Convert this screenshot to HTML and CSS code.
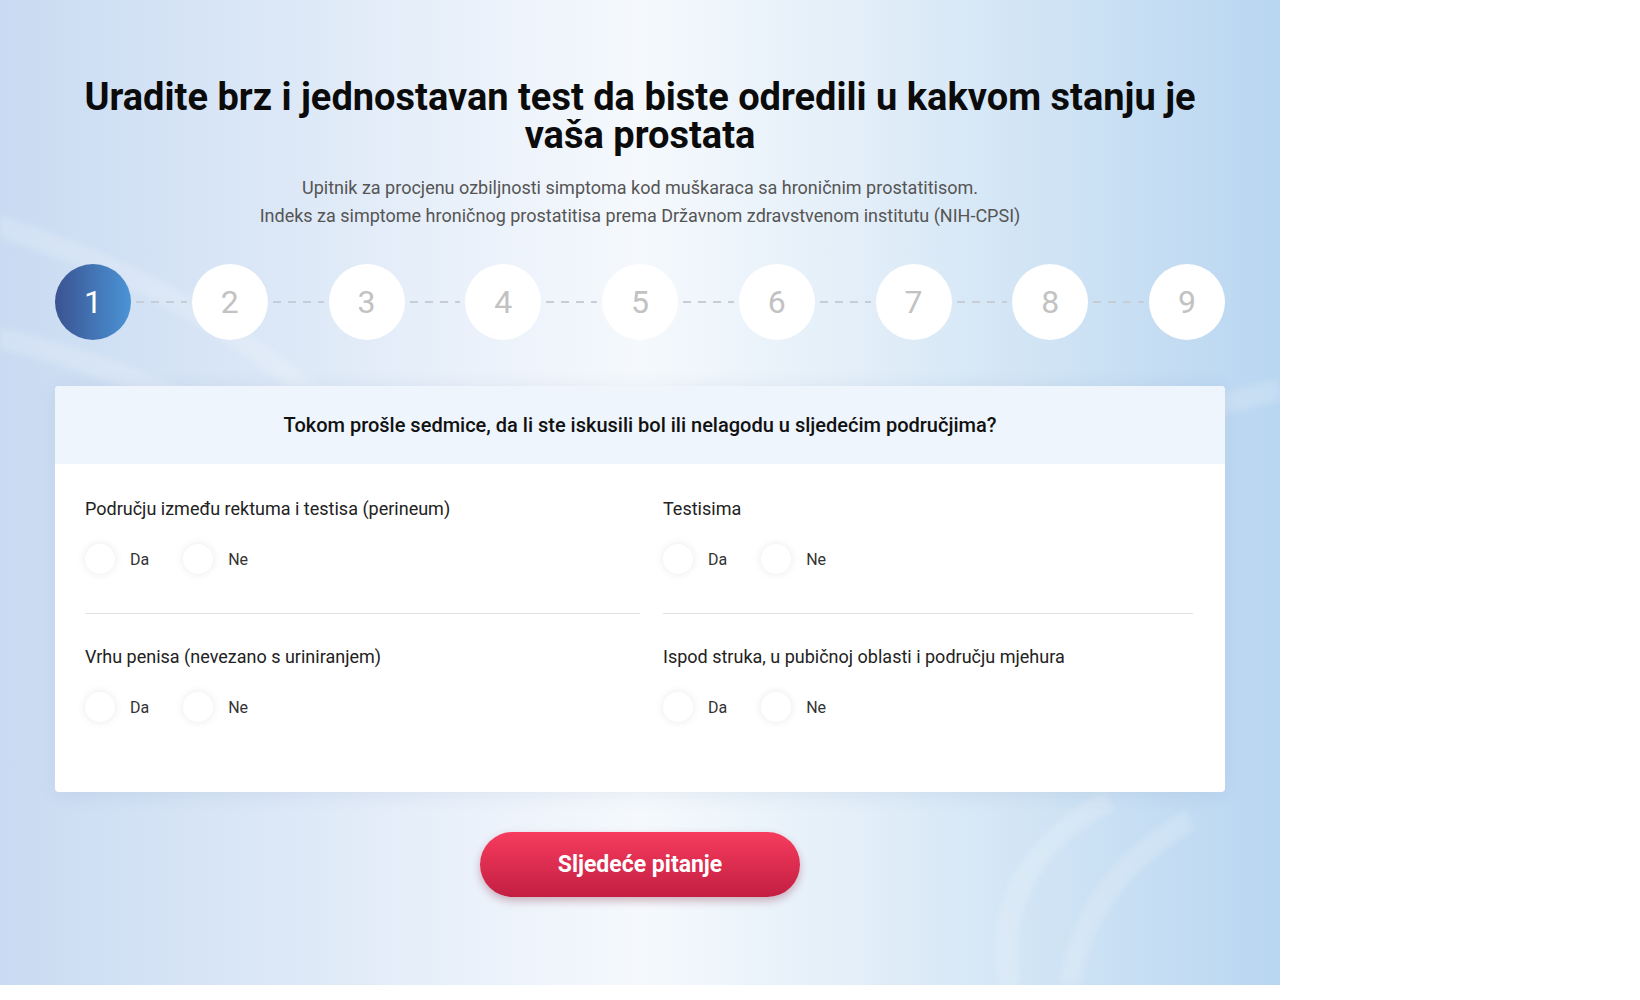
FILE: index.html
```html
<!DOCTYPE html>
<html lang="bs">
<head>
  <meta charset="UTF-8">
  <title>Test prostate</title>
  <link rel="stylesheet" href="styles.css">
</head>
<body>

  <!-- Quiz section -->
  <section class="quiz">
    <svg class="waves" viewBox="0 0 1280 985" preserveAspectRatio="none">
      <path d="M-60 210 C 100 250, 230 320, 330 410" />
      <path d="M-40 330 C 40 345, 120 370, 180 400" />
      <path d="M1280 390 C 1210 405, 1150 425, 1100 450" />
      <path d="M1010 985 C 995 910, 1030 840, 1110 800" />
      <path d="M1070 985 C 1080 915, 1120 860, 1190 820" />
    </svg>

    <div class="container">
      <h1 class="title">Uradite brz i jednostavan test da biste odredili u kakvom stanju je vaša prostata</h1>
      <p class="subtitle">
        Upitnik za procjenu ozbiljnosti simptoma kod muškaraca sa hroničnim prostatitisom.<br>
        Indeks za simptome hroničnog prostatitisa prema Državnom zdravstvenom institutu (NIH-CPSI)
      </p>

      <div class="steps">
        <div class="step active">1</div>
        <div class="dash"></div>
        <div class="step">2</div>
        <div class="dash"></div>
        <div class="step">3</div>
        <div class="dash"></div>
        <div class="step">4</div>
        <div class="dash"></div>
        <div class="step">5</div>
        <div class="dash"></div>
        <div class="step">6</div>
        <div class="dash"></div>
        <div class="step">7</div>
        <div class="dash"></div>
        <div class="step">8</div>
        <div class="dash"></div>
        <div class="step">9</div>
      </div>

      <div class="card">
        <div class="card-head">Tokom prošle sedmice, da li ste iskusili bol ili nelagodu u sljedećim područjima?</div>
        <div class="card-body">
          <div class="item">
            <div class="item-label">Području između rektuma i testisa (perineum)</div>
            <div class="options">
              <label class="option"><input type="radio" name="q1"><span class="radio"></span>Da</label>
              <label class="option"><input type="radio" name="q1"><span class="radio"></span>Ne</label>
            </div>
          </div>
          <div class="item">
            <div class="item-label">Testisima</div>
            <div class="options">
              <label class="option"><input type="radio" name="q2"><span class="radio"></span>Da</label>
              <label class="option"><input type="radio" name="q2"><span class="radio"></span>Ne</label>
            </div>
          </div>
          <div class="item last">
            <div class="item-label">Vrhu penisa (nevezano s uriniranjem)</div>
            <div class="options">
              <label class="option"><input type="radio" name="q3"><span class="radio"></span>Da</label>
              <label class="option"><input type="radio" name="q3"><span class="radio"></span>Ne</label>
            </div>
          </div>
          <div class="item last">
            <div class="item-label">Ispod struka, u pubičnoj oblasti i području mjehura</div>
            <div class="options">
              <label class="option"><input type="radio" name="q4"><span class="radio"></span>Da</label>
              <label class="option"><input type="radio" name="q4"><span class="radio"></span>Ne</label>
            </div>
          </div>
        </div>
      </div>

      <div class="actions">
        <button type="button" class="next-btn">Sljedeće pitanje</button>
      </div>
    </div>
  </section>

</body>
</html>
```

FILE: styles.css
```css
body {
  margin: 0;
  font-family: Roboto, "Liberation Sans", Arial, sans-serif;
  background-color: #fff;
  color: #222;
}

.quiz {
  position: relative;
  width: 1280px;
  height: 985px;
  background: linear-gradient(90deg, #c9dbf2 0%, #dce8f7 22%, #edf3fb 40%, #f5f9fd 50%, #e4eff9 66%, #cde2f4 84%, #b9d6f1 100%);
}

.quiz::after {
  content: "";
  position: absolute;
  left: 626px;
  bottom: -13px;
  border-left: 14px solid transparent;
  border-right: 14px solid transparent;
  border-top: 13px solid #eef4fb;
}

.waves {
  position: absolute;
  left: 0;
  top: 0;
  width: 1280px;
  height: 985px;
  pointer-events: none;
  filter: blur(3px);
}

.waves path {
  fill: none;
  stroke: rgba(255, 255, 255, 0.18);
  stroke-width: 22;
}

.container {
  position: relative;
  width: 1170px;
  margin: 0 auto;
  padding-top: 78px;
}

.title {
  margin: 0;
  font-size: 38px;
  line-height: 38px;
  font-weight: 700;
  text-align: center;
  color: #0b0b0b;
}

.subtitle {
  margin: 20px 0 0;
  font-size: 18px;
  line-height: 28px;
  text-align: center;
  color: #555;
}

.steps {
  display: flex;
  align-items: center;
  margin-top: 34px;
}

.step {
  width: 76px;
  height: 76px;
  flex: none;
  border-radius: 50%;
  background-color: #fff;
  color: #c2c2c2;
  font-size: 32px;
  line-height: 76px;
  text-align: center;
}

.step.active {
  background: linear-gradient(90deg, #3a5391, #4b94d6);
  color: #fff;
}

.dash {
  flex: 1;
  height: 2px;
  margin: 0 5px;
  background: repeating-linear-gradient(90deg, #c6cdd6 0 8px, transparent 8px 15px);
}

.card {
  margin-top: 46px;
  background-color: #fff;
  border-radius: 4px;
  box-shadow: 0 2px 20px rgba(40, 70, 110, 0.08);
  overflow: hidden;
}

.card-head {
  height: 78px;
  line-height: 78px;
  background-color: #eef5fc;
  text-align: center;
  font-size: 20px;
  font-weight: 500;
  color: #111;
}

.card-body {
  display: grid;
  grid-template-columns: 555px 530px;
  column-gap: 23px;
  padding: 2px 30px 31px;
}

.item {
  padding: 31px 0 39px;
  border-bottom: 1px solid #e2e2e2;
}

.item.last {
  border-bottom: none;
}

.item-label {
  font-size: 18px;
  line-height: 24px;
  color: #222;
}

.options {
  display: flex;
  align-items: center;
  margin-top: 23px;
}

.option {
  display: flex;
  align-items: center;
  margin-right: 34px;
  font-size: 16px;
  color: #333;
  cursor: pointer;
}

.option input {
  display: none;
}

.radio {
  width: 30px;
  height: 30px;
  margin-right: 15px;
  border-radius: 50%;
  background-color: #fff;
  box-shadow: 0 0 10px rgba(0, 0, 0, 0.09);
}

.actions {
  display: flex;
  justify-content: center;
  margin-top: 40px;
}

.next-btn {
  width: 320px;
  height: 65px;
  border: none;
  border-radius: 33px;
  background: linear-gradient(180deg, #f73c5e, #c21e41);
  box-shadow: 0 4px 8px rgba(120, 20, 45, 0.3);
  color: #fff;
  font-family: Roboto, "Liberation Sans", Arial, sans-serif;
  font-size: 23px;
  font-weight: 700;
  cursor: pointer;
}

.next-btn:hover {
  background: linear-gradient(180deg, #e8304f, #b01838);
}
```
